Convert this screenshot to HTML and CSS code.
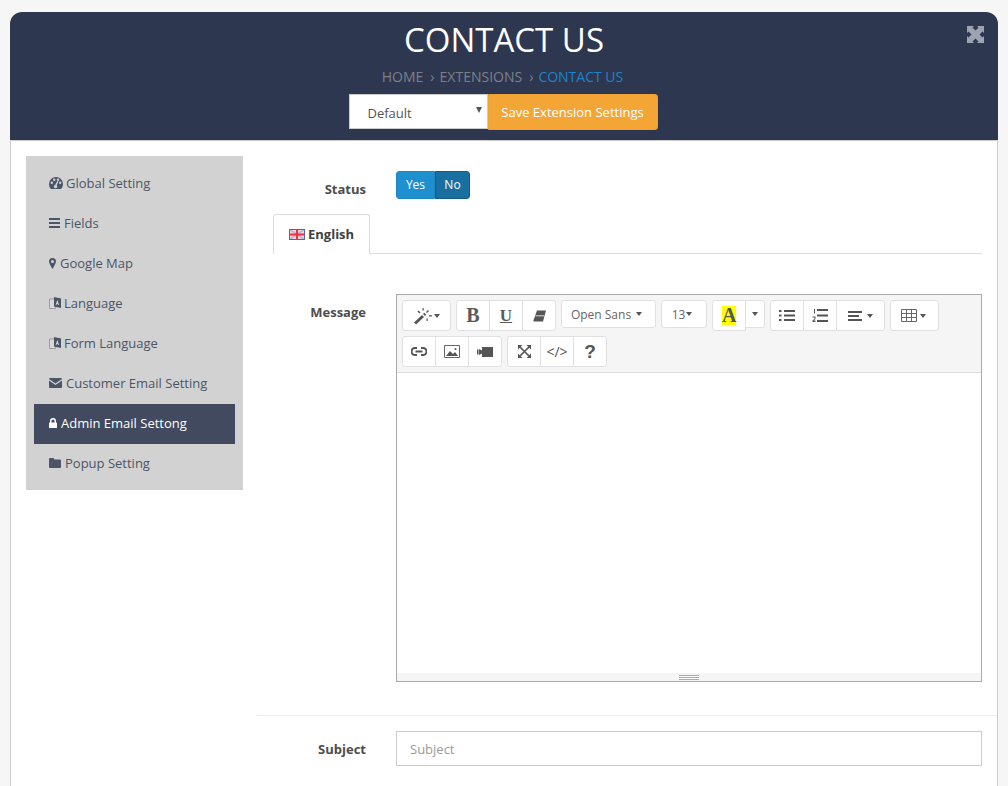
FILE: index.html
```html
<!DOCTYPE html>
<html lang="en">
<head>
<meta charset="utf-8">
<title>Contact Us</title>
<link rel="stylesheet" href="styles.css">
</head>
<body>
<div class="panel">
  <header class="head">
    <h1 class="title">CONTACT US</h1>
    <div class="crumbs"><span>HOME</span><i>›</i><span>EXTENSIONS</span><i>›</i><span class="cur">CONTACT US</span></div>
    <div class="actions">
      <div class="select">Default<b class="sel-arrow"></b></div>
      <button class="save">Save Extension Settings</button>
    </div>
    <svg class="expand" viewBox="0 0 17 17"><path d="M0 0h7L5.500 1.500 8.500 4.500l3-3L10 0h7v7l-1.500-1.500-3 3 3 3L17 10v7h-7l1.500-1.500-3-3-3 3L7 17H0v-7l1.500 1.500 3-3-3-3L0 7z"/></svg>
  </header>
  <div class="main">
    <nav class="side">
      <a class="item"><svg class="ic w14" viewBox="0 0 14 12"><path fill-rule="evenodd" d="M7 0a7 7 0 0 1 7 7c0 1.800-.6 3.500-1.700 4.800l-.5.200H2.200l-.5-.2A7 7 0 0 1 0 7a7 7 0 0 1 7-7zM2.800 4.500a1.200 1.200 0 1 0 0 2.400 1.200 1.200 0 0 0 0-2.400zM5.200 1.600a1.200 1.200 0 1 0 0 2.400 1.200 1.200 0 0 0 0-2.400zM9 1.600a1.200 1.200 0 1 0 0 2.400 1.200 1.200 0 0 0 0-2.400zM11.200 4.500a1.200 1.200 0 1 0 0 2.400 1.200 1.200 0 0 0 0-2.400zM8.200 4L6.200 8a1.600 1.600 0 1 0 1.500.500L9.300 4.500z"/></svg>Global Setting</a>
      <a class="item"><svg class="ic w11" viewBox="0 0 11 10"><path d="M0 0h11v2H0zM0 4h11v2H0zM0 8h11v2H0z"/></svg>Fields</a>
      <a class="item"><svg class="ic w7" viewBox="0 0 7 11"><path fill-rule="evenodd" d="M3.500 0A3.500 3.500 0 0 1 7 3.500c0 1.300-1.900 5-3.500 7.500C1.900 8.500 0 4.800 0 3.500A3.500 3.500 0 0 1 3.500 0zm0 2a1.500 1.500 0 1 0 0 3 1.500 1.500 0 0 0 0-3z"/></svg>Google Map</a>
      <a class="item"><svg class="ic w12" viewBox="0 0 12 12"><path class="lang-back" d="M.5 2h6v9.500h-6z"/><path d="M5 0l7 1.500V11L5 9.500z"/><path class="lang-a" d="M8.400 2.800L10.100 8H9l-.3-1.100H7.800L7.500 8H6.600z"/></svg>Language</a>
      <a class="item"><svg class="ic w12" viewBox="0 0 12 12"><path class="lang-back" d="M.5 2h6v9.500h-6z"/><path d="M5 0l7 1.500V11L5 9.500z"/><path class="lang-a" d="M8.400 2.800L10.100 8H9l-.3-1.100H7.800L7.500 8H6.600z"/></svg>Form Language</a>
      <a class="item"><svg class="ic w13" viewBox="0 0 13 10"><path d="M1 0h11a1 1 0 0 1 1 1L6.500 5.500 0 1a1 1 0 0 1 1-1zM0 2.500l6.500 4.500L13 2.500V9a1 1 0 0 1-1 1H1a1 1 0 0 1-1-1z"/></svg>Customer Email Setting</a>
      <a class="item active"><svg class="ic w8" viewBox="0 0 8 10"><path fill-rule="evenodd" d="M4 0a3 3 0 0 1 3 3v1.500h.5a.5.500 0 0 1 .5.500v4.500a.5.500 0 0 1-.5.500h-7a.5.500 0 0 1-.5-.500V5a.5.500 0 0 1 .5-.500H1V3a3 3 0 0 1 3-3zm0 1.500A1.500 1.500 0 0 0 2.500 3v1.500h3V3A1.500 1.500 0 0 0 4 1.500z"/></svg>Admin Email Settong</a>
      <a class="item"><svg class="ic w12 folder" viewBox="0 0 12 10"><path d="M1 0h3.500l1 1.500H11a1 1 0 0 1 1 1V9a1 1 0 0 1-1 1H1a1 1 0 0 1-1-1V1a1 1 0 0 1 1-1z"/></svg>Popup Setting</a>
    </nav>
    <section class="content">
      <div class="status-row">
        <label class="lab">Status</label>
        <div class="toggle"><span class="yes">Yes</span><span class="no">No</span></div>
      </div>
      <div class="tabs">
        <div class="tab">
          <svg class="flag" viewBox="0 0 16 11"><rect width="16" height="11" fill="#f6d5dc"/><path d="M0 0l16 11M16 0L0 11" stroke="#b5b5dc" stroke-width="1.500"/><path d="M8 1v9M1 5.500h14" stroke="#f0303a" stroke-width="2"/><rect x=".5" y=".5" width="15" height="10" fill="none" stroke="#5a62a8"/></svg>English
        </div>
      </div>
      <div class="msg-row">
        <label class="lab">Message</label>
        <div class="editor">
          <div class="toolbar">
            <div class="line">
              <div class="grp"><button class="b bw48"><svg class="t" width="20" height="18" viewBox="0 0 20 18"><path d="M0 15.500L8 8l2 2-8 7.500z"/><path d="M9 7l1.300-1.300 2 2L11 9z"/><path d="M8.500 1h1.200v2.500H8.500zM14 3l1 1-2 2-1-1zM3.500 4.500l1-1 2 2-1 1zM15 8.200h3v1.200h-3zM12.500 11.500h1.200v2.500h-1.200z"/></svg><b class="caret wand"></b></button></div>
              <div class="grp">
                <button class="b bw33 serif big">B</button>
                <button class="b bw33 serif under">U</button>
                <button class="b bw33"><svg class="t" width="13" height="12" viewBox="0 0 13 12"><path d="M4 .5h9L10 11.500H1.500a1 1 0 0 1-1-1.300z"/><path d="M2.500 5.800h9" stroke="#fff" stroke-width=".8"/></svg></button>
              </div>
              <div class="grp short"><button class="b font">Open Sans<b class="caret"></b></button></div>
              <div class="grp short"><button class="b size">13<b class="caret tight"></b></button></div>
              <div class="grp color">
                <button class="b bw33 colorb"><span class="hl">A</span></button>
                <button class="b colorc"><b class="caret none"></b></button>
              </div>
              <div class="grp">
                <button class="b bw33"><svg class="t" width="16" height="11" viewBox="0 0 16 11"><path d="M0 0h2.500v2H0zM5 0h11v2H5zM0 4.500h2.500v2H0zM5 4.500h11v2H5zM0 9h2.500v2H0zM5 9h11v2H5z"/></svg></button>
                <button class="b bw33"><svg class="t" width="16" height="15" viewBox="0 0 16 15"><path d="M5 1h11v2H5zM5 6.500h11v2H5zM5 12h11v2H5z"/><path d="M2 1h1v4.500H2zM.5 8.500h3v2.500l-2 1.500h2v1.500H.5v-1.500l2-1.800V9.500h-2z"/></svg></button>
                <button class="b bw48"><svg class="t" width="14" height="10" viewBox="0 0 14 10"><path d="M0 0h14v2H0zM0 4h11v2H0zM0 8h14v2H0z"/></svg><b class="caret"></b></button>
              </div>
              <div class="grp"><button class="b bw48 tbl"><svg class="t" width="16" height="13" viewBox="0 0 16 13"><path fill="none" stroke="#666" d="M.5.500h15v12H.5zM.5 4.500h15M.5 8.500h15M5.500.500v12M10.500.500v12"/></svg><b class="caret cl"></b></button></div>
            </div>
            <div class="line">
              <div class="grp">
                <button class="b bw33"><svg class="t" width="16" height="9" viewBox="0 0 16 9"><path fill="none" stroke="#555" stroke-width="2" d="M6 1H4a3.500 3.500 0 0 0 0 7h2M10 1h2a3.500 3.500 0 0 1 0 7h-2M4.500 4.500h7"/></svg></button>
                <button class="b bw33"><svg class="t" width="16" height="13" viewBox="0 0 16 13"><path fill="none" stroke="#666" d="M.5.500h15v12H.5z"/><path d="M2 11l4-5 3 3 2-2 3 4zM11.500 3a1 1 0 1 0 0 2 1 1 0 0 0 0-2z"/></svg></button>
                <button class="b bw33"><svg class="t" width="16" height="10" viewBox="0 0 16 10"><path d="M5 0h11v10H5zM0 2.500h1.500v5H0zM2 2l3 1.500v3L2 8z"/></svg></button>
              </div>
              <div class="grp">
                <button class="b bw33"><svg class="t" width="13" height="13" viewBox="0 0 13 13"><path d="M0 0h4.500L0 4.500zM13 0v4.500L8.500 0zM0 13V8.500L4.500 13zM13 13H8.500L13 8.500z"/><path fill="none" stroke="#555" stroke-width="1.600" d="M2 2l9 9M11 2l-9 9"/></svg></button>
                <button class="b bw33 code">&lt;/&gt;</button>
                <button class="b bw33 help">?</button>
              </div>
            </div>
          </div>
          <div class="area"></div>
          <div class="grip"><span></span></div>
        </div>
      </div>
      <div class="subject-row">
        <label class="lab">Subject</label>
        <div class="input">Subject</div>
      </div>
    </section>
  </div>
</div>
</body>
</html>
```
FILE: styles.css
```css
* { box-sizing: border-box; }
html, body { height: 786px; overflow: hidden; }
body { margin: 0; background: #f6f6f6; font-family: "Open Sans", sans-serif; font-size: 13px; color: #4b5568; }
.panel { margin: 12px 10px 0; }
.head { position: relative; height: 128px; background: #2d3750; border-radius: 12px 12px 0 0; text-align: center; padding-top: 5px; }
.title { margin: 0; font-size: 33px; line-height: 46px; font-weight: 400; color: #fff; }
.crumbs { margin-top: 4px; padding-right: 3px; font-size: 14px; line-height: 20px; color: #7d8088; display: flex; justify-content: center; }
.crumbs i { font-style: normal; margin: 0 5px 0 7px; }
.crumbs .cur { color: #1f83c9; }
.actions { display: flex; justify-content: center; margin-top: 7px; padding-right: 2px; }
.select { position: relative; width: 139px; height: 35px; background: #fff; border: 1px solid #ccc; padding-left: 18px; line-height: 37px; font-size: 13px; color: #555; text-align: left; }
.sel-arrow { position: absolute; right: 5px; top: 12px; border-left: 3.500px solid transparent; border-right: 3.500px solid transparent; border-top: 6px solid #555; }
.save { width: 170px; height: 36px; background: #f3a536; border: 1px solid #eea236; border-radius: 0 3px 3px 0; color: #fff; font: 500 13px "Open Sans", sans-serif; padding: 0; }
.expand { position: absolute; right: 14px; top: 14px; width: 17px; height: 17px; fill: #9ea3b1; }
.main { display: flex; background: #fff; border: 1px solid #ccc; border-width: 1px 1px 0; padding: 15px 15px 0; height: 650px; }
.side { width: 217px; height: 334px; flex: none; background: #d2d2d2; padding: 8px 8px 6px; }
.item { display: flex; align-items: center; height: 40px; padding: 0 0 2px 15px; color: #4b5568; font-size: 13px; }
.item.active { background: #414a5e; color: #fff; }
.ic { flex: none; margin-right: 3px; fill: currentColor; }
.w14 { width: 14px; height: 12px; }
.w11 { width: 11px; height: 10px; margin-right: 4px; }
.w7 { width: 7px; height: 11px; margin-right: 4px; }
.w12 { width: 12px; height: 12px; }
.w12.folder { margin-right: 4px; }
.w13 { width: 13px; height: 10px; margin-right: 4px; }
.w8 { width: 8px; height: 10px; margin-right: 4px; }
.lang-back { fill: #d8d8d8; stroke: #888; stroke-width: .7; }
.lang-a { fill: #d2d2d2; }
.content { flex: 1; min-width: 0; padding-left: 14px; }
.lab { flex: none; width: 109px; text-align: right; font-weight: 700; color: #4d4d4d; font-size: 13px; }
.status-row { display: flex; padding-top: 15px; height: 58px; }
.status-row .lab { line-height: 36px; }
.toggle { display: flex; margin-left: 30px; height: 28px; font-size: 12px; font-weight: 500; color: #fff; line-height: 25px; border-radius: 3px; overflow: hidden; }
.yes { width: 39px; background: #1e90cf; border: 1px solid #1c86c0; border-radius: 3px 0 0 3px; text-align: center; }
.no { width: 35px; background: #17709f; border: 1px solid #125e88; border-radius: 0 3px 3px 0; text-align: center; }
.tabs { margin-left: 16px; height: 40px; border-bottom: 1px solid #ddd; width: 709px; }
.tab { display: flex; align-items: center; width: 97px; height: 40px; padding: 0 0 2px 15px; background: #fff; border: 1px solid #ddd; border-bottom: 0; border-radius: 3px 3px 0 0; font-weight: 700; color: #3f3f3f; font-size: 13px; }
.flag { width: 16px; height: 11px; margin: 2px 3px 0 0; }
.msg-row { display: flex; margin-top: 40px; height: 422px; border-bottom: 1px solid #eee; margin-right: -15px; }
.msg-row .lab { line-height: 36px; }
.editor { margin-left: 30px; width: 586px; height: 388px; border: 1px solid #a9a9a9; display: flex; flex-direction: column; }
.toolbar { height: 78px; flex: none; background: #f5f5f5; border-bottom: 1px solid #ddd; padding: 5px 0 0 5px; }
.line { display: flex; height: 31px; margin-bottom: 5px; }
.grp { display: flex; margin-right: 5px; height: 31px; }
.grp.short { height: 28px; }
.b { display: flex; align-items: center; justify-content: center; height: 100%; padding: 0; background: #fff; border: 1px solid #e0e0e0; margin-left: -1px; color: #666; font: 12px "Open Sans", sans-serif; }
.b:first-child { margin-left: 0; border-radius: 3px 0 0 3px; }
.b:last-child { border-radius: 0 3px 3px 0; }
.b:only-child { border-radius: 3px; }
.bw33 { width: 34px; }
.bw48 { width: 49px; }
.t { fill: #555; flex: none; }
.serif { font-family: "Liberation Serif", serif; font-weight: 700; font-size: 20px; color: #5a5a5a; }
.under { text-decoration: underline; font-size: 17px; }
.font { width: 95px; padding-right: 4px; }
.size { width: 46px; padding-right: 4px; }
.caret { display: inline-block; margin-left: 5px; border-left: 3px solid transparent; border-right: 3px solid transparent; border-top: 4px solid #555; }
.caret.tight { margin-left: 1px; }
.caret.none { margin-left: 0; }
.caret.wand { margin-left: 0; }
.caret.cl { margin-left: 3px; }
.tbl { padding-right: 2px; }
.hl { display: block; width: 14px; height: 19px; background: #ff0; font: 700 20px/19px "Liberation Serif", serif; color: #555; }
.color { height: 31px; }
.colorb { border-radius: 3px 0 0 3px; }
.colorc { width: 20px; height: 28px; }
.code { font-size: 14px; color: #555; }
.help { font: 700 19px "Liberation Sans", sans-serif; color: #555; }
.area { flex: 1; background: #fff; }
.grip { height: 8px; flex: none; background: #f5f5f5; display: flex; justify-content: center; align-items: center; }
.grip span { width: 20px; height: 5px; border-top: 1px solid #aaa; border-bottom: 1px solid #aaa; background: linear-gradient(#fff 1px, #aaa 1px, #aaa 2px, #fff 2px); }
.subject-row { display: flex; margin-top: 15px; }
.subject-row .lab { line-height: 35px; padding-top: 1px; }
.input { margin-left: 30px; width: 586px; height: 35px; border: 1px solid #ccc; padding-left: 13px; line-height: 35px; color: #999; font-size: 13px; }
```
